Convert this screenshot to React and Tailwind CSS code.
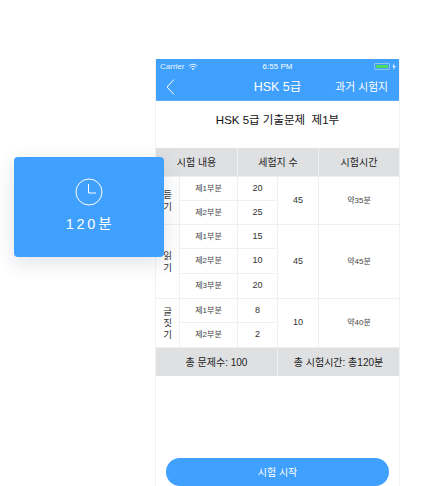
const font = { fontFamily: '"Liberation Sans", "Noto Sans CJK KR", sans-serif' };

const cell = 'bg-white flex items-center justify-center text-[8px] text-[#444]';
const num = 'bg-white flex items-center justify-center text-[9px] text-[#333]';
const side = 'bg-white flex items-center justify-center text-[9.5px] leading-[11.5px] text-center text-[#333]';
const head = 'bg-[#dfe0e2] flex items-center justify-center text-[10px] text-[#222]';

function WifiIcon() {
    return (
        <svg width="10" height="8" viewBox="0 0 12 9" fill="none" stroke="white" strokeWidth="1.2" className="ml-1">
            <path d="M0.8 3.2C3.6 0.6 8.4 0.6 11.2 3.2" />
            <path d="M2.6 5C4.5 3.3 7.5 3.3 9.4 5" />
            <path d="M6 8.4L4.3 6.6C5.3 5.8 6.7 5.8 7.7 6.6Z" fill="white" stroke="none" />
        </svg>
    );
}

function StatusBar() {
    return (
        <div className="h-[15px] relative flex items-center justify-between pl-1 pr-[3px] text-white">
            <div className="flex items-center text-[8px] opacity-90">
                Carrier
                <WifiIcon />
            </div>
            <div className="absolute left-0 right-0 text-center text-[8px]">6:55 PM</div>
            <div className="flex items-center gap-[2px]">
                <div className="w-[16px] h-[7px] rounded-[1px] border border-[#8fc4f5] p-px">
                    <div className="w-full h-full bg-[#4cd964]" />
                </div>
                <svg width="4" height="7" viewBox="0 0 4 7">
                    <path d="M2.4 0L0.4 3.8H1.8L1.4 7L3.6 3H2.1Z" fill="white" />
                </svg>
            </div>
        </div>
    );
}

function NavBar() {
    return (
        <div className="h-[26px] relative flex items-center justify-between pl-[10px] pr-[11px] text-white">
            <svg width="9" height="16" viewBox="0 0 9 16" fill="none" stroke="white" strokeWidth="1">
                <path d="M8 0.5L1 8L8 15.5" />
            </svg>
            <div className="absolute left-0 right-0 text-center text-[12.5px]">HSK 5급</div>
            <div className="text-[10.8px] relative">과거 시험지</div>
        </div>
    );
}

function ExamTable() {
    return (
        <div className="grid grid-cols-[23px_57px_39px_40px_80px] grid-rows-[28px_23px_23px_23px_24px_24px_23px_24px_28px] gap-px bg-[#f0f0f0] w-full">
            <div className={`${head} col-span-2`}>시험 내용</div>
            <div className={`${head} col-span-2`}>세험지 수</div>
            <div className={head}>시험시간</div>

            <div className={`${side} row-span-2`}>듣<br />기</div>
            <div className={cell}>제1부분</div>
            <div className={num}>20</div>
            <div className={`${num} row-span-2`}>45</div>
            <div className={`${cell} row-span-2`}>약35분</div>
            <div className={cell}>제2부분</div>
            <div className={num}>25</div>

            <div className={`${side} row-span-3`}>읽<br />기</div>
            <div className={cell}>제1부분</div>
            <div className={num}>15</div>
            <div className={`${num} row-span-3`}>45</div>
            <div className={`${cell} row-span-3`}>약45분</div>
            <div className={cell}>제2부분</div>
            <div className={num}>10</div>
            <div className={cell}>제3부분</div>
            <div className={num}>20</div>

            <div className={`${side} row-span-2`}>글<br />짓<br />기</div>
            <div className={cell}>제1부분</div>
            <div className={num}>8</div>
            <div className={`${num} row-span-2`}>10</div>
            <div className={`${cell} row-span-2`}>약40분</div>
            <div className={cell}>제2부분</div>
            <div className={num}>2</div>

            <div className={`${head} col-span-3`}>총 문제수: 100</div>
            <div className={`${head} col-span-2`}>총 시험시간: 총120분</div>
        </div>
    );
}

export default function App() {
    return (
        <div className="relative w-[421px] h-[486px] bg-white overflow-hidden pl-[155px] pt-[59px]" style={font}>
            {/* Phone */}
            <div className="w-[245px] h-[427px] border-x border-[#f2f2f2] flex flex-col">
                <div className="bg-[#3fa0fe] border-b border-[#5aaefb]">
                    <StatusBar />
                    <NavBar />
                </div>
                <div className="h-[47px] pb-[8px] flex items-center justify-center text-[11.5px] text-[#111]">
                    HSK 5급 기출문제&nbsp;&nbsp;제1부
                </div>
                <ExamTable />
                <div className="mt-auto px-[10px]">
                    <button className="w-full h-[28px] rounded-full bg-[#3fa0fe] text-white text-[10px]">시험 시작</button>
                </div>
            </div>

            {/* Time card */}
            <div className="absolute left-[14px] top-[157px] w-[150px] h-[100px] rounded-[4px] bg-[#3fa0fe] shadow-[0_6px_20px_rgba(40,60,90,0.14)] flex flex-col items-center text-white">
                <svg width="28" height="28" viewBox="0 0 28 28" fill="none" stroke="white" className="mt-[21px]">
                    <circle cx="14" cy="14" r="13" />
                    <path d="M13.5 6V15H21" />
                </svg>
                <div className="mt-[8px] text-[14.5px] tracking-[2.8px] pl-[2px]">120분</div>
            </div>
        </div>
    );
}
